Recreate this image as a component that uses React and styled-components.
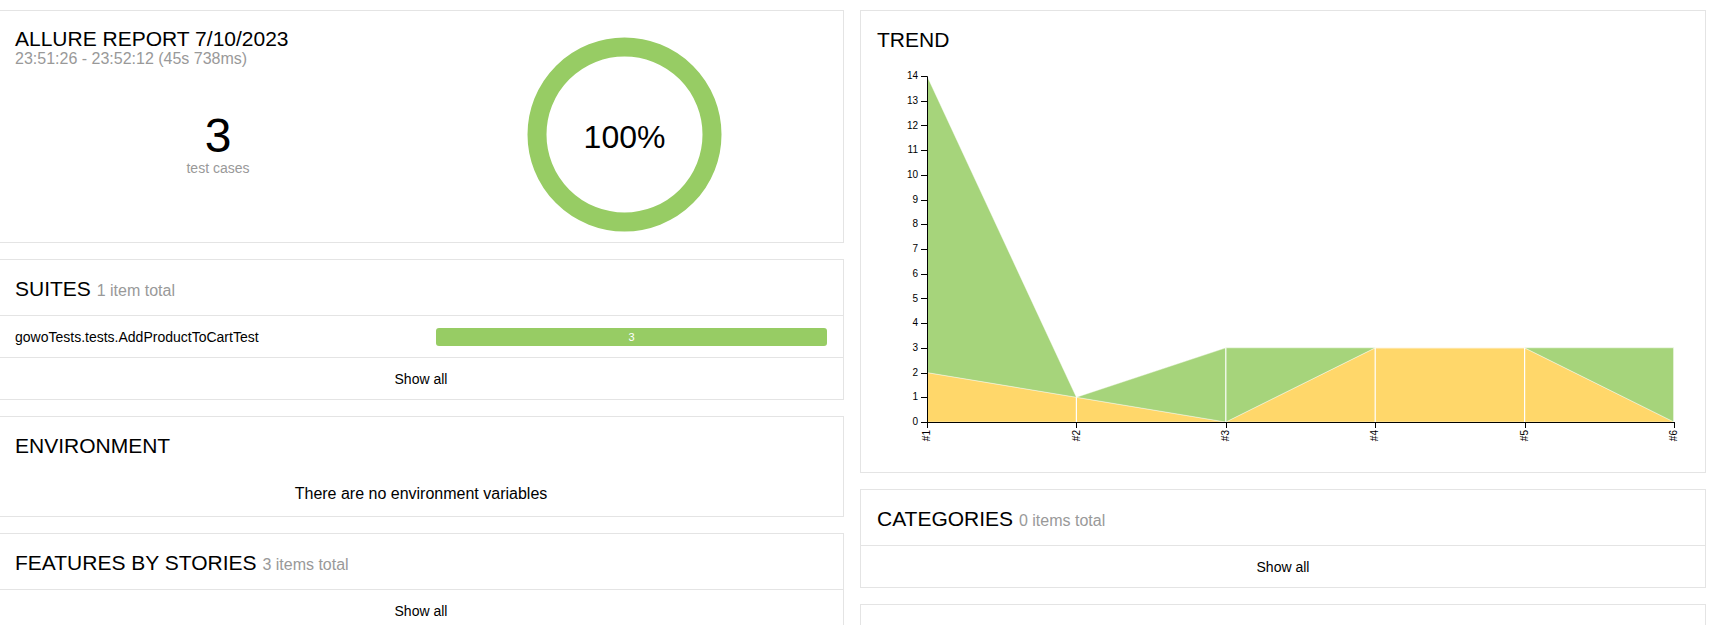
import React from "react";
import styled, { createGlobalStyle } from "styled-components";

const GlobalStyle = createGlobalStyle`
	html, body {
		margin: 0;
		background: #fff;
		overflow: hidden;
	}
	body {
		font-family: "Liberation Sans", Arial, sans-serif;
		color: #000;
	}
	*, *::before, *::after {
		box-sizing: border-box;
	}
`;

const PASSED = "#97cc64";
const BROKEN = "#ffd050";

const trend = [
	{ name: "#1", passed: 12, broken: 2 },
	{ name: "#2", passed: 0, broken: 1 },
	{ name: "#3", passed: 3, broken: 0 },
	{ name: "#4", passed: 0, broken: 3 },
	{ name: "#5", passed: 0, broken: 3 },
	{ name: "#6", passed: 3, broken: 0 },
];

function Donut() {
	return (
		<svg width="195" height="195" viewBox="0 0 195 195">
			<circle cx="97.5" cy="97.5" r="87.5" fill="none" stroke={PASSED} strokeWidth="19" />
			<text x="97.5" y="111" textAnchor="middle" fontSize="32" fontFamily="Liberation Sans, Arial, sans-serif" fill="#000">
				100%
			</text>
		</svg>
	);
}

function TrendChart() {
	const left = 66;
	const step = 149.4;
	const bottom = 356;
	const unit = 346 / 14;
	const x = (i) => left + i * step;
	const y = (v) => bottom - v * unit;
	const right = x(trend.length - 1);

	const brokenTop = trend.map((d, i) => `${x(i)},${y(d.broken)}`);
	const totalTop = trend.map((d, i) => `${x(i)},${y(d.broken + d.passed)}`);
	const yellow = [`${left},${bottom}`, ...brokenTop, `${right},${bottom}`].join(" ");
	const green = [...totalTop, ...[...brokenTop].reverse()].join(" ");
	const ticks = Array.from({ length: 15 }, (_, v) => v);

	return (
		<svg width="844" height="406" viewBox="0 0 844 406" fontFamily="Liberation Sans, Arial, sans-serif">
			<polygon points={yellow} fill={BROKEN} fillOpacity="0.85" stroke="#fff" strokeOpacity="0.4" />
			<polygon points={green} fill={PASSED} fillOpacity="0.85" stroke="#fff" strokeOpacity="0.4" />
			{trend.slice(1).map((d, k) => (
				<line
					key={d.name}
					x1={x(k + 1)}
					x2={x(k + 1)}
					y1={bottom}
					y2={y(d.broken + d.passed)}
					stroke="#fff"
					strokeWidth="1.2"
				/>
			))}
			<path d={`M${left - 6},10.5H${left + 0.5}V${bottom + 0.5}`} fill="none" stroke="#000" />
			{ticks.map((v) => (
				<g key={v}>
					<line x1={left - 6} x2={left} y1={Math.round(y(v)) + 0.5} y2={Math.round(y(v)) + 0.5} stroke="#000" />
					<text x={left - 9} y={y(v)} dy="0.32em" textAnchor="end" fontSize="10" fill="#000">
						{v}
					</text>
				</g>
			))}
			<path d={`M${left},${bottom + 0.5}H${right}`} fill="none" stroke="#000" />
			{trend.map((d, i) => (
				<g key={d.name}>
					<line x1={Math.round(x(i)) + 0.5} x2={Math.round(x(i)) + 0.5} y1={bottom} y2={bottom + 6} stroke="#000" />
					<text
						transform={`translate(${x(i)},${bottom + 8}) rotate(-90)`}
						dy="0.32em"
						textAnchor="end"
						fontSize="10"
						fill="#000"
					>
						{d.name}
					</text>
				</g>
			))}
		</svg>
	);
}

function App() {
	return (
		<>
			<GlobalStyle />
			<Dashboard>
				<Column>
					<SummaryWidget>
						<SummaryPane>
							<ReportTitle>ALLURE REPORT 7/10/2023</ReportTitle>
							<Subtle>23:51:26 - 23:52:12 (45s 738ms)</Subtle>
							<Stat>
								<StatValue>3</StatValue>
								<StatLabel>test cases</StatLabel>
							</Stat>
						</SummaryPane>
						<DonutPane>
							<Donut />
						</DonutPane>
					</SummaryWidget>

					<Widget>
						<WidgetHeader $divided>
							SUITES <Count>1 item total</Count>
						</WidgetHeader>
						<SuiteRow>
							<SuiteName>gowoTests.tests.AddProductToCartTest</SuiteName>
							<BarCell>
								<Bar>3</Bar>
							</BarCell>
						</SuiteRow>
						<ShowAll>Show all</ShowAll>
					</Widget>

					<Widget>
						<WidgetHeader>ENVIRONMENT</WidgetHeader>
						<EmptyNote>There are no environment variables</EmptyNote>
					</Widget>

					<Widget>
						<WidgetHeader $divided>
							FEATURES BY STORIES <Count>3 items total</Count>
						</WidgetHeader>
						<ShowAll>Show all</ShowAll>
					</Widget>
				</Column>

				<Column>
					<Widget>
						<WidgetHeader>TREND</WidgetHeader>
						<ChartBody>
							<TrendChart />
						</ChartBody>
					</Widget>

					<Widget>
						<WidgetHeader $divided>
							CATEGORIES <Count>0 items total</Count>
						</WidgetHeader>
						<ShowAll>Show all</ShowAll>
					</Widget>

					<Widget>
						<WidgetHeader>EXECUTORS</WidgetHeader>
						<EmptyNote>There is no information about tests executors</EmptyNote>
					</Widget>
				</Column>
			</Dashboard>
		</>
	);
}

export default App;

const Dashboard = styled.div`
	display: grid;
	grid-template-columns: 846px 846px;
	column-gap: 16px;
	align-items: start;
	margin: 10px 0 0 -2px;
`;

const Column = styled.div`
	display: flex;
	flex-direction: column;
	gap: 16px;
`;

const Widget = styled.section`
	border: 1px solid #e4e4e4;
	background: #fff;
`;

const SummaryWidget = styled(Widget)`
	display: flex;
	padding: 0 16px;
`;

const SummaryPane = styled.div`
	width: 50%;
	padding-top: 16px;
`;

const ReportTitle = styled.h2`
	margin: 0;
	font-size: 21px;
	line-height: 23px;
	font-weight: normal;
`;

const Subtle = styled.div`
	font-size: 16px;
	line-height: 18px;
	color: #999;
`;

const Stat = styled.div`
	margin-top: 44px;
	text-align: center;
`;

const StatValue = styled.div`
	font-size: 48px;
	line-height: 48px;
`;

const StatLabel = styled.div`
	font-size: 14px;
	line-height: 16px;
	color: #999;
`;

const DonutPane = styled.div`
	width: 50%;
	display: flex;
	justify-content: center;
	padding: 26px 0 10px;
`;

const WidgetHeader = styled.h2`
	margin: 0;
	height: ${(p) => (p.$divided ? "56px" : "55px")};
	padding: 17px 16px 15px;
	font-size: 21px;
	line-height: 23px;
	font-weight: normal;
	white-space: nowrap;
	border-bottom: ${(p) => (p.$divided ? "1px solid #e4e4e4" : "none")};
`;

const Count = styled.span`
	font-size: 16px;
	line-height: 16px;
	color: #999;
`;

const SuiteRow = styled.div`
	display: flex;
	align-items: center;
	height: 42px;
	padding: 0 16px;
	font-size: 14px;
	border-bottom: 1px solid #e4e4e4;
`;

const SuiteName = styled.div`
	width: 50%;
`;

const BarCell = styled.div`
	width: 50%;
	padding-left: 15px;
`;

const Bar = styled.div`
	height: 18px;
	border-radius: 3px;
	background: ${PASSED};
	color: #fff;
	font-size: 11px;
	line-height: 18px;
	text-align: center;
`;

const ShowAll = styled.div`
	height: 41px;
	display: flex;
	align-items: center;
	justify-content: center;
	font-size: 14px;
`;

const EmptyNote = styled.div`
	padding: 13px 16px;
	font-size: 16px;
	line-height: 18px;
	text-align: center;
`;

const ChartBody = styled.div`
	height: 406px;
	svg {
		display: block;
	}
`;
